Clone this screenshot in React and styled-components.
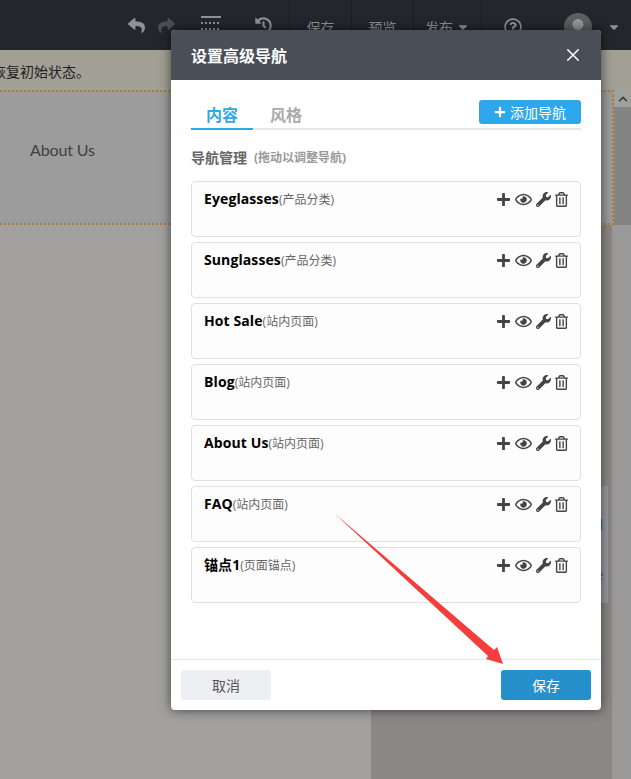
import React from "react"
import styled, { createGlobalStyle } from "styled-components"
import { FaPlus, FaRegEye, FaWrench, FaRegTrashAlt, FaReply, FaShare, FaHistory, FaRegQuestionCircle, FaUser, FaCaretDown, FaChevronUp } from "react-icons/fa"
import { IoCloseOutline } from "react-icons/io5"

const CJK = `"Open Sans", "Noto Sans CJK SC", sans-serif`

const GlobalStyle = createGlobalStyle`
  html, body {
    margin: 0;
    padding: 0;
    background: #9d9d9d;
  }
  * {
    box-sizing: border-box;
  }
`

const Page = styled.div`
  position: relative;
  width: 631px;
  height: 779px;
  overflow: hidden;
  display: flex;
  flex-direction: column;
  font-family: ${CJK};
  background: #9d9d9d;
`

/* ---- dimmed editor behind the dialog ---- */
const TopBar = styled.div`
  height: 50px;
  flex: none;
  background: #23272b;
  display: flex;
  align-items: center;
  color: #8f9296;
  font-size: 14px;
`
const BarIcons = styled.div`
  width: 289px;
  flex: none;
  display: flex;
  align-items: center;
  padding-left: 128px;
`
const BarIcon = styled.span`
  display: flex;
  width: ${(p) => p.$w}px;
  font-size: 17px;
  color: ${(p) => (p.$dim ? "#4b4e52" : "#8f9296")};
`
const BarCell = styled.div`
  width: ${(p) => p.$w}px;
  height: 50px;
  flex: none;
  display: flex;
  align-items: center;
  justify-content: center;
  gap: 3px;
  padding-top: 3px;
  border-left: 1px solid #1a1d20;
`
const Avatar = styled.div`
  width: 28px;
  height: 28px;
  border-radius: 50%;
  margin: 3px 0 0 21px;
  overflow: hidden;
  flex: none;
  display: flex;
  justify-content: center;
  align-items: flex-end;
  background: #5f5f60;
  color: #96979a;
  font-size: 22px;
`
const TopCaret = styled.span`
  display: flex;
  margin: 4px 0 0 15px;
  font-size: 14px;
  color: #8f9296;
`
const Notice = styled.div`
  height: 40px;
  flex: none;
  padding: 12px 0 0;
  margin-left: -8px;
  background: #a2a095;
  color: #222;
  font-size: 14px;
  line-height: 19px;
  white-space: nowrap;
`
const Stage = styled.div`
  flex: 1;
  display: flex;
  min-height: 0;
`
const Canvas = styled.div`
  width: 614px;
  flex: none;
  display: flex;
  flex-direction: column;
`
const DottedBlock = styled.div`
  height: 135px;
  flex: none;
  padding: 48px 0 0 30px;
  background: #9c9c9c;
  border-top: 2px dotted #b47a2c;
  border-bottom: 2px dotted #b47a2c;
  border-right: 2px dotted #b47a2c;
  color: #404040;
  font-family: "Lato", sans-serif;
  font-size: 16px;
  line-height: 20px;
  letter-spacing: -0.15px;
`
const Lower = styled.div`
  flex: 1;
  display: flex;
`
const LowerLeft = styled.div`
  width: 371px;
  flex: none;
  background: #a2a1a0;
`
const LowerRight = styled.div`
  flex: 1;
  background: #8b8785;
  padding: 261px 4px 0 0;
  border-right: 2px solid #9a9a9a;
`
const SidePanel = styled.div`
  height: 117px;
  background: #9a9aa0;
  display: flex;
  flex-direction: column;
  align-items: flex-end;
  padding: 30px 5px 0 0;
  gap: 32px;
  color: #1d5f8a;
  font-size: 14px;
  line-height: 18px;
`
const ScrollTrack = styled.div`
  flex: 1;
  display: flex;
  flex-direction: column;
  background: #9a9a9a;
`
const ScrollUp = styled.div`
  height: 17px;
  display: flex;
  align-items: center;
  justify-content: center;
  background: #a0a09f;
  color: #3c3c3c;
  font-size: 10px;
`
const ScrollThumb = styled.div`
  height: 118px;
  background: #848484;
`

/* ---- dialog ---- */
const Dialog = styled.div`
  position: absolute;
  left: 171px;
  top: 30px;
  width: 430px;
  height: 680px;
  display: flex;
  flex-direction: column;
  background: #fff;
  border-radius: 4px;
  box-shadow: 0 0 12px rgba(0, 0, 0, 0.6);
  overflow: hidden;
`
const DialogHead = styled.div`
  height: 50px;
  flex: none;
  display: flex;
  align-items: center;
  justify-content: space-between;
  padding: 0 16px 0 20px;
  background: #4a4e57;
  color: #fff;
`
const DialogTitle = styled.div`
  font-size: 16px;
  font-weight: 700;
`
const CloseBtn = styled.span`
  display: flex;
  font-size: 24px;
  margin-top: -1px;
`
const DialogBody = styled.div`
  flex: 1;
  padding: 20px 20px 0;
`
const TabRow = styled.div`
  height: 30px;
  display: flex;
  align-items: flex-start;
  justify-content: space-between;
  border-bottom: 2px solid #e8e8e8;
`
const Tabs = styled.div`
  display: flex;
`
const Tab = styled.div`
  width: 62px;
  height: 30px;
  padding-top: 4px;
  text-align: center;
  font-size: 16px;
  line-height: 22px;
  font-weight: 700;
  color: ${(p) => (p.$active ? "#2ea7eb" : "#aaa")};
  border-bottom: 2px solid ${(p) => (p.$active ? "#2ea7eb" : "transparent")};
  & + & {
    width: 66px;
  }
`
const AddBtn = styled.div`
  width: 102px;
  height: 24px;
  display: flex;
  align-items: center;
  justify-content: center;
  gap: 4px;
  background: #2ea7eb;
  border-radius: 3px;
  color: #fff;
  font-size: 14px;
  svg {
    font-size: 12px;
  }
`
const SectionLabel = styled.div`
  margin-top: 17px;
  display: flex;
  align-items: center;
  gap: 7px;
  height: 20px;
  font-size: 14px;
  font-weight: 700;
  color: #666;
`
const SectionHint = styled.span`
  font-size: 12px;
  color: #999;
`
const NavList = styled.div`
  margin-top: 14px;
  display: flex;
  flex-direction: column;
  gap: 5px;
`
const NavCard = styled.div`
  height: 56px;
  display: flex;
  justify-content: space-between;
  padding: 7px 12px 0 12px;
  background: #fdfdfd;
  border: 1px solid #e0e0e0;
  border-radius: 4px;
`
const NavName = styled.div`
  font-size: 14px;
  line-height: 20px;
  font-weight: 700;
  color: #000;
  letter-spacing: 0.1px;
`
const NavKind = styled.span`
  font-size: 12px;
  font-weight: 400;
  color: #666;
  letter-spacing: 0;
`
const NavTools = styled.div`
  display: flex;
  align-items: center;
  height: 20px;
  color: #444;
`
const Tool = styled.span`
  display: flex;
  justify-content: center;
  width: ${(p) => p.$w}px;
  font-size: ${(p) => p.$s}px;
`
const DialogFoot = styled.div`
  height: 51px;
  flex: none;
  display: flex;
  justify-content: space-between;
  padding: 10px 10px 0;
  border-top: 1px solid #e6e6e6;
`
const FootBtn = styled.div`
  width: 90px;
  height: 30px;
  display: flex;
  align-items: center;
  justify-content: center;
  border-radius: 3px;
  font-size: 14px;
  background: ${(p) => (p.$primary ? "#2590cc" : "#eeeff3")};
  color: ${(p) => (p.$primary ? "#fff" : "#555")};
`
const Arrow = styled.svg`
  position: absolute;
  left: 0;
  top: 0;
  pointer-events: none;
`

const navItems = [
  { name: "Eyeglasses", kind: "(产品分类)" },
  { name: "Sunglasses", kind: "(产品分类)" },
  { name: "Hot Sale", kind: "(站内页面)" },
  { name: "Blog", kind: "(站内页面)" },
  { name: "About Us", kind: "(站内页面)" },
  { name: "FAQ", kind: "(站内页面)" },
  { name: "锚点1", kind: "(页面锚点)" },
]

const GridIcon = () => (
  <svg width="20" height="18" viewBox="0 0 20 18" fill="#8f9296">
    <rect x="0" y="0" width="20" height="2" />
    <path d="M0 6h2v2H0zM4 6h2v2H4zM8 6h2v2H8zM12 6h2v2h-2zM16 6h2v2h-2zM0 12h2v2H0zM4 12h2v2H4zM8 12h2v2H8zM12 12h2v2h-2zM16 12h2v2h-2z" />
  </svg>
)

const App = () => {
  return (
    <Page>
      <GlobalStyle />
      <TopBar>
        <BarIcons>
          <BarIcon $w={30}><FaReply /></BarIcon>
          <BarIcon $w={43} $dim><FaShare /></BarIcon>
          <BarIcon $w={54}><GridIcon /></BarIcon>
          <BarIcon $w={34}><FaHistory /></BarIcon>
        </BarIcons>
        <BarCell $w={62}>保存</BarCell>
        <BarCell $w={62}>预览</BarCell>
        <BarCell $w={68}>发布<FaCaretDown size={14} /></BarCell>
        <BarCell $w={62}><FaRegQuestionCircle size={18} /></BarCell>
        <Avatar><FaUser /></Avatar>
        <TopCaret><FaCaretDown /></TopCaret>
      </TopBar>
      <Notice>恢复初始状态。</Notice>
      <Stage>
        <Canvas>
          <DottedBlock>About Us</DottedBlock>
          <Lower>
            <LowerLeft />
            <LowerRight>
              <SidePanel>
                <span>l</span>
                <span>e</span>
              </SidePanel>
            </LowerRight>
          </Lower>
        </Canvas>
        <ScrollTrack>
          <ScrollUp><FaChevronUp /></ScrollUp>
          <ScrollThumb />
        </ScrollTrack>
      </Stage>

      <Dialog>
        <DialogHead>
          <DialogTitle>设置高级导航</DialogTitle>
          <CloseBtn><IoCloseOutline /></CloseBtn>
        </DialogHead>
        <DialogBody>
          <TabRow>
            <Tabs>
              <Tab $active>内容</Tab>
              <Tab>风格</Tab>
            </Tabs>
            <AddBtn><FaPlus />添加导航</AddBtn>
          </TabRow>
          <SectionLabel>
            导航管理
            <SectionHint>(拖动以调整导航)</SectionHint>
          </SectionLabel>
          <NavList>
            {navItems.map((item) => (
              <NavCard key={item.name}>
                <NavName>
                  {item.name}
                  <NavKind>{item.kind}</NavKind>
                </NavName>
                <NavTools>
                  <Tool $w={21} $s={15}><FaPlus /></Tool>
                  <Tool $w={18} $s={17}><FaRegEye /></Tool>
                  <Tool $w={23} $s={15}><FaWrench /></Tool>
                  <Tool $w={13} $s={15}><FaRegTrashAlt /></Tool>
                </NavTools>
              </NavCard>
            ))}
          </NavList>
        </DialogBody>
        <DialogFoot>
          <FootBtn>取消</FootBtn>
          <FootBtn $primary>保存</FootBtn>
        </DialogFoot>
      </Dialog>

      <Arrow width="631" height="779" viewBox="0 0 631 779">
        <polygon points="334,513 494,650 497,647 503,664 486,659 488,656" fill="#f63d3d" />
      </Arrow>
    </Page>
  )
}

export default App
